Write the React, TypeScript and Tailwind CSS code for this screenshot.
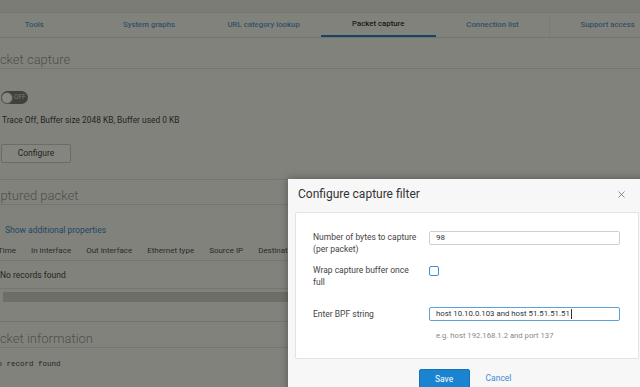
import { X } from 'lucide-react';

const tabs = ['Tools', 'System graphs', 'URL category lookup', 'Packet capture', 'Connection list', 'Support access'];
const columns = ['Time', 'In interface', 'Out interface', 'Ethernet type', 'Source IP', 'Destination IP'];

function Heading({ text }: { text: string }) {
  return (
    <div className="border-b border-[#d6d6d6] -ml-[15px] pl-0">
      <div className="text-[13px] leading-[16px] font-light text-[#8a8a8a] whitespace-nowrap">{text}</div>
    </div>
  );
}

function CaptureModal() {
  return (
    <div className="absolute left-[288px] top-[179px] w-[358px] h-[230px] bg-[#f7f7f7] shadow-[0_0_8px_rgba(0,0,0,0.35)]">
      <div className="h-[33px] flex items-start justify-between pl-[10px] pr-[19px] pt-[7px]">
        <span className="text-[12px] leading-[16px] text-[#333]">Configure capture filter</span>
        <X className="w-[11px] h-[11px] mt-[3px] text-[#666]" strokeWidth={1.6} />
      </div>
      <div className="mx-[7px] bg-white border border-[#e3e3e3] rounded-[2px] pt-[18px] pb-[16px] pl-[17px] text-[8.5px] leading-[12px] text-[#444]">
        <div className="flex">
          <div className="w-[116px] pr-[6px]">Number of bytes to capture (per packet)</div>
          <div className="w-[191px] h-[14px] border border-[#cfcfcf] rounded-[2px] px-[6px] flex items-center text-[8px] text-[#333]">98</div>
        </div>
        <div className="flex mt-[9px]">
          <div className="w-[116px]">
            Wrap capture buffer once
            <br />
            full
          </div>
          <div className="w-[10px] h-[10px] mt-[2px] border border-[#3f8fd8] rounded-[2px]" />
        </div>
        <div className="flex mt-[19px]">
          <div className="w-[116px] pt-[1px]">Enter BPF string</div>
          <div>
            <div className="w-[191px] h-[14px] border border-[#5aa0dc] rounded-[2px] px-[6px] flex items-center text-[7.8px] text-[#333]">
              host 10.10.0.103 and host 51.51.51.51
              <span className="w-px h-[10px] bg-[#333] ml-[1px]" />
            </div>
            <div className="mt-[9px] pl-[7px] text-[7.7px] text-[#888]">e.g. host 192.168.1.2 and port 137</div>
          </div>
        </div>
      </div>
      <div className="flex justify-center items-start gap-[16px] pt-[10px] pr-[4px]">
        <button className="w-[51px] h-[20px] bg-[#1b84d0] rounded-[2px] text-white text-[8.5px] border border-[#1572b8]">Save</button>
        <button className="text-[8.5px] text-[#3a8ed2] mt-[3px]">Cancel</button>
      </div>
    </div>
  );
}

export default function App() {
  return (
    <div className="relative w-[640px] h-[387px] overflow-hidden bg-[#f1f1f0] font-['Roboto',sans-serif]">
      <div className="h-[12px] bg-[#e4e4e3]" />
      <div className="h-[26px] border-y border-[#d6d6d6] flex -ml-[23px]">
        {tabs.map((t, i) => (
          <div
            key={t}
            className={`w-[114.67px] shrink-0 flex items-center justify-center text-[7.8px] font-medium ${
              i === 3 ? 'text-[#222] border-b-2 border-[#1f74b8]' : 'text-[#4d8fc4]'
            } ${i === 4 ? 'border-r border-[#e2e2e2]' : ''}`}
          >
            {t}
          </div>
        ))}
      </div>

      <div className="pt-[14px] h-[33px] flex flex-col">
        <Heading text="Packet capture" />
      </div>
      <div className="border-b border-[#d6d6d6] pl-[1px] pt-[20px] pb-[16px]">
        <div className="w-[27px] h-[13px] rounded-full bg-[#6e6e6e] flex items-center relative">
          <div className="w-[12px] h-[12px] rounded-full bg-white border border-[#999]" />
          <span className="text-[6.5px] text-[#ddd] ml-[1px]">OFF</span>
        </div>
        <div className="mt-[10px] text-[8.4px] leading-[12px] text-[#333] pl-[1px]">
          Trace Off, Buffer size 2048 KB, Buffer used 0 KB
        </div>
        <button className="mt-[18px] w-[70px] h-[19px] border border-[#c4c4c4] bg-[#f6f6f6] rounded-[2px] text-[8.5px] text-[#333]">
          Configure
        </button>
      </div>

      <div className="pt-[8px] h-[28px] flex flex-col">
        <Heading text="Captured packet" />
      </div>
      <div className="pl-[5px] pt-[16px] text-[8.5px] leading-[12px] text-[#2f7bbb]">Show additional properties</div>
      <div className="flex gap-[15px] -ml-[2px] mt-[9px] pb-[3px] border-b border-[#d6d6d6] text-[8px] leading-[12px] text-[#444] whitespace-nowrap">
        {columns.map((c) => (
          <span key={c}>{c}</span>
        ))}
      </div>
      <div className="pt-[8px] pb-[7px] border-b border-[#d6d6d6] text-[8.5px] leading-[12px] text-[#333]">No records found</div>
      <div className="pt-[3px] pb-[19px] border-b border-[#d6d6d6] pl-[3px]">
        <div className="h-[10px] bg-[#c9c9c6]" />
      </div>

      <div className="pt-[9px] h-[28px] flex flex-col">
        <Heading text="Packet information" />
      </div>
      <div className="-ml-[7px] pt-[8px] font-['Liberation_Mono',monospace] text-[7.5px] leading-[12px] text-[#333]">
        No record found
      </div>

      <div className="absolute inset-0 bg-[#14140a]/50" />
      <CaptureModal />
    </div>
  );
}
